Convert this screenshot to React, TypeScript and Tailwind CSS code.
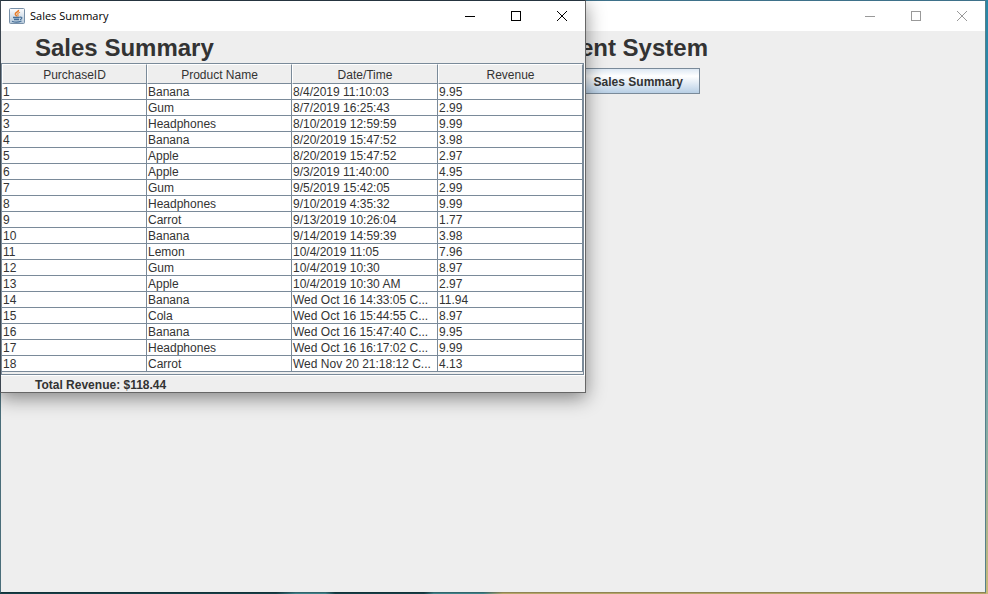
import React from "react";

type Sale = [string, string, string, string];

const columns = ["PurchaseID", "Product Name", "Date/Time", "Revenue"];

const sales: Sale[] = [
  ["1", "Banana", "8/4/2019 11:10:03", "9.95"],
  ["2", "Gum", "8/7/2019 16:25:43", "2.99"],
  ["3", "Headphones", "8/10/2019 12:59:59", "9.99"],
  ["4", "Banana", "8/20/2019 15:47:52", "3.98"],
  ["5", "Apple", "8/20/2019 15:47:52", "2.97"],
  ["6", "Apple", "9/3/2019 11:40:00", "4.95"],
  ["7", "Gum", "9/5/2019 15:42:05", "2.99"],
  ["8", "Headphones", "9/10/2019 4:35:32", "9.99"],
  ["9", "Carrot", "9/13/2019 10:26:04", "1.77"],
  ["10", "Banana", "9/14/2019 14:59:39", "3.98"],
  ["11", "Lemon", "10/4/2019 11:05", "7.96"],
  ["12", "Gum", "10/4/2019 10:30", "8.97"],
  ["13", "Apple", "10/4/2019 10:30 AM", "2.97"],
  ["14", "Banana", "Wed Oct 16 14:33:05 C...", "11.94"],
  ["15", "Cola", "Wed Oct 16 15:44:55 C...", "8.97"],
  ["16", "Banana", "Wed Oct 16 15:47:40 C...", "9.95"],
  ["17", "Headphones", "Wed Oct 16 16:17:02 C...", "9.99"],
  ["18", "Carrot", "Wed Nov 20 21:18:12 C...", "4.13"],
];

function JavaIcon() {
  return (
    <svg width="16" height="16" viewBox="0 0 16 16" fill="none" aria-hidden="true">
      <defs>
        <linearGradient id="cupTile" x1="0" y1="0" x2="0" y2="1">
          <stop offset="0" stopColor="#fdfdfe" />
          <stop offset="1" stopColor="#b4c8da" />
        </linearGradient>
      </defs>
      <rect x="0.5" y="0.5" width="15" height="15" rx="1" fill="url(#cupTile)" stroke="#7890a8" />
      <path d="M9.500 1.800C10 4 6 4.300 6.300 6.200C6.500 7.200 7.600 7.400 7.700 8.500" stroke="#e87822" strokeWidth="1.500" />
      <path d="M11 4.300C8.600 5.200 8.300 6 9 6.900C9.400 7.500 8.900 8 8.600 8.600" stroke="#ee9040" strokeWidth="1.200" />
      <path d="M4 9.500H10.500M5 11.500H10" stroke="#466f98" strokeWidth="1.300" />
      <path d="M3 13.300C5.500 14.300 10 14.200 12.500 13" stroke="#466f98" strokeWidth="1.200" />
      <path d="M10.500 9.300C13.800 8.500 13.500 10.900 10.900 11.600" stroke="#466f98" strokeWidth="1.200" />
    </svg>
  );
}

function WindowControls({ muted = false }: { muted?: boolean }) {
  const tone = muted ? "text-[#999999]" : "text-black";
  const button = "flex h-[29px] w-[46px] items-center justify-center";
  return (
    <div className={`flex ${tone}`}>
      <button type="button" aria-label="Minimize" className={button}>
        <svg width="10" height="10" shapeRendering="crispEdges">
          <path d="M0 5.500H10" stroke="currentColor" />
        </svg>
      </button>
      <button type="button" aria-label="Maximize" className={button}>
        <svg width="10" height="10" shapeRendering="crispEdges">
          <rect x="0.5" y="0.5" width="9" height="9" fill="none" stroke="currentColor" />
        </svg>
      </button>
      <button type="button" aria-label="Close" className={button}>
        <svg width="10" height="10">
          <path d="M0 0L10 10M10 0L0 10" stroke="currentColor" />
        </svg>
      </button>
    </div>
  );
}

function SalesTable() {
  return (
    <div className="border-r border-b border-white">
      <div className="border border-[#7a8a99] pb-[2px]">
        <table className="w-full table-fixed border-separate border-spacing-0 text-[12px] leading-[14px]">
          <colgroup>
            <col className="w-[145px]" />
            <col className="w-[145px]" />
            <col className="w-[146px]" />
            <col />
          </colgroup>
          <thead>
            <tr>
              {columns.map((name) => (
                <th
                  key={name}
                  scope="col"
                  className="h-5 border-t border-r border-b border-l border-t-white border-r-[#7a8a99] border-b-[#7a8a99] border-l-white p-0 pt-[2px] text-center font-normal"
                >
                  {name}
                </th>
              ))}
            </tr>
          </thead>
          <tbody>
            {sales.map((sale) => (
              <tr key={sale[0]} className="bg-white">
                {sale.map((value, i) => (
                  <td
                    key={columns[i]}
                    className="h-4 overflow-hidden border-r border-b border-[#7a8a99] p-0 pt-px pl-px whitespace-nowrap"
                  >
                    {value}
                  </td>
                ))}
              </tr>
            ))}
          </tbody>
        </table>
      </div>
    </div>
  );
}

function SalesDialog() {
  return (
    <section
      role="dialog"
      aria-labelledby="dialog-title"
      className="absolute top-0 left-0 w-[586px] border border-t-[#25343f] border-r-[#666666] border-b-[#666666] border-l-[#3c4650] bg-[#eeeeee] shadow-[0_5px_18px_rgba(0,0,0,0.45)]"
    >
      <header className="flex h-[30px] items-start justify-between bg-white pl-2">
        <div className="flex h-[29px] items-center gap-[5px]">
          <JavaIcon />
          <span id="dialog-title" className="font-['Open_Sans',sans-serif] text-[11px] leading-4 text-black">
            Sales Summary
          </span>
        </div>
        <WindowControls />
      </header>
      <h1 className="pt-[2px] pl-[34px] text-[24px] leading-[30px] font-bold">Sales Summary</h1>
      <SalesTable />
      <p className="pt-[2px] pl-[34px] text-[12px] leading-[14px] font-bold">Total Revenue: $118.44</p>
    </section>
  );
}

export default function App() {
  return (
    <div className="relative h-screen overflow-hidden bg-linear-to-b from-[#2a87a8] from-30% via-[#80aaa8] via-70% to-[#c8b978] pr-[2px] font-['Liberation_Sans',Arial,sans-serif] text-[#333333]">
      <div className="h-full bg-[linear-gradient(to_right,#173f48_28%,#3f7f88_30%,#3f7f88_33%,#173f48_34%,#173f48_43%,#3f8088_44%,#3f8088_49%,#b5a568_51%)] pb-px">
        <main className="h-full border border-t-[#3e718a] border-r-[#55808a] border-b-black/20 border-l-[#496d79] bg-[#eeeeee] bg-clip-padding">
          <header className="flex h-[30px] justify-end bg-white">
            <WindowControls muted />
          </header>
          <h2 className="w-[707px] pt-[2px] text-right text-[24px] leading-[30px] font-bold">Management System</h2>
          <div className="flex w-[699px] justify-end pt-[5px]">
            <button
              type="button"
              className="h-[26px] border border-[#7a8a99] bg-linear-to-b from-[#dde8f3] via-white via-30% to-[#b8cfe5] px-4 pt-[2px] text-[12px] font-bold"
            >
              Sales Summary
            </button>
          </div>
        </main>
      </div>
      <SalesDialog />
    </div>
  );
}
